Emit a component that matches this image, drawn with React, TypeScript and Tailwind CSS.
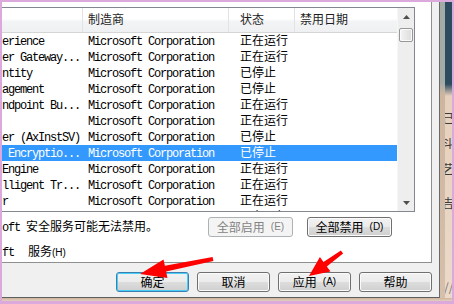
import React from "react";

type Row = { name: string; maker: string; status: string; selected?: boolean };

const rows: Row[] = [
  { name: "erience", maker: "Microsoft Corporation", status: "正在运行" },
  { name: "er Gateway...", maker: "Microsoft Corporation", status: "正在运行" },
  { name: "ntity", maker: "Microsoft Corporation", status: "已停止" },
  { name: "agement", maker: "Microsoft Corporation", status: "已停止" },
  { name: "ndpoint Bu...", maker: "Microsoft Corporation", status: "正在运行" },
  { name: "", maker: "Microsoft Corporation", status: "正在运行" },
  { name: "er (AxInstSV)", maker: "Microsoft Corporation", status: "已停止" },
  { name: " Encryptio...", maker: "Microsoft Corporation", status: "已停止", selected: true },
  { name: "Engine", maker: "Microsoft Corporation", status: "正在运行" },
  { name: "lligent Tr...", maker: "Microsoft Corporation", status: "正在运行" },
  { name: "r", maker: "Microsoft Corporation", status: "正在运行" },
  { name: "", maker: "Microsoft Corporation", status: "正在运行" },
];

// half-width latin text in the list font is 6px a char
function Latin({ children }: { children: React.ReactNode }) {
  return <span className="tracking-[-1.2px] whitespace-pre">{children}</span>;
}

function Key({ children }: { children: React.ReactNode }) {
  return <span className="ml-[6px] text-[10px] font-['Liberation_Sans',sans-serif]">{children}</span>;
}

const btnBase =
  "h-[20px] rounded-[3px] border flex items-center justify-center text-[12px] leading-[16px] font-['Noto_Sans_CJK_SC',sans-serif]";
const btnNormal =
  btnBase +
  " border-[#707070] text-black bg-[linear-gradient(#f2f2f2_0%,#ebebeb_50%,#dddddd_51%,#cfcfcf_100%)] shadow-[inset_0_0_0_1px_#fbfbfb]";

export default function App() {
  return (
    <div className="relative w-[454px] h-[304px] overflow-hidden bg-[#dba9dc] pt-[2px] pl-[2px] pr-[2px] pb-[3px] text-[12px] leading-[16px] text-black font-['Liberation_Mono','Noto_Sans_CJK_SC',monospace]">
      <div className="flex flex-col w-full h-full">
        <div className="flex h-[296px]">
          {/* dialog */}
          <div className="flex flex-col w-[437px] bg-[#f0f0f0] border-b border-[#5e5e5e]">
            {/* tab page */}
            <div className="w-[430px] h-[261px] shrink-0 bg-white border-r border-b border-[#8e8f8f] pt-[5px] flex flex-col">
              {/* services list */}
              <div className="flex w-[413px] h-[205px] shrink-0 border-t border-r border-b border-[#828790]">
                <div className="w-[395px] overflow-hidden flex flex-col">
                  <div className="h-[25px] shrink-0 flex border-b border-[#d5d5d5] bg-[linear-gradient(#ffffff_0%,#ffffff_45%,#f3f4f6_55%,#eff0f2_100%)] text-[#1e1e1e]">
                    <div className="w-[81px] border-r border-[#e2e3e5]" />
                    <div className="w-[146px] border-r border-[#e2e3e5] pl-[5px] pt-[5px]">制造商</div>
                    <div className="w-[66px] border-r border-[#e2e3e5] pl-[11px] pt-[5px]">状态</div>
                    <div className="flex-1 pl-[5px] pt-[5px]">禁用日期</div>
                  </div>
                  {rows.map((r, i) => (
                    <div
                      key={i}
                      className={
                        "h-[16px] shrink-0 flex leading-[18px] " +
                        (r.selected ? "bg-[#3399ff] text-white" : "text-black")
                      }
                    >
                      <div className="w-[81px] overflow-hidden">
                        <Latin>{r.name}</Latin>
                      </div>
                      <div className="w-[146px] pl-[5px] overflow-hidden">
                        <Latin>{r.maker}</Latin>
                      </div>
                      <div className="w-[66px] pl-[11px] h-[16px] overflow-hidden">{r.status}</div>
                      <div className="flex-1" />
                    </div>
                  ))}
                </div>
                {/* vertical scrollbar */}
                <div className="w-[17px] flex flex-col bg-[#eeeeee] border-l border-[#f7f7f7]">
                  <div className="h-[18px] flex items-center justify-center">
                    <svg width="7" height="4" viewBox="0 0 7 4">
                      <polygon points="3.5,0 7,4 0,4" fill="#4f4f4f" />
                    </svg>
                  </div>
                  <div className="mt-[2px] mx-[1px] h-[14px] rounded-[2px] border border-[#979797] bg-[linear-gradient(90deg,#f4f4f4,#dcdcdc)] shadow-[inset_0_0_0_1px_#fafafa]" />
                  <div className="flex-1" />
                  <div className="h-[17px] flex items-center justify-center">
                    <svg width="7" height="4" viewBox="0 0 7 4">
                      <polygon points="0,0 7,0 3.5,4" fill="#4f4f4f" />
                    </svg>
                  </div>
                </div>
              </div>

              {/* below the list */}
              <div className="flex items-start mt-[5px] pr-[39px]">
                <div className="mt-[3px] leading-[16px] whitespace-pre">
                  <Latin>oft </Latin>安全服务可能无法禁用。
                </div>
                <div className="ml-auto flex gap-[14px]">
                  <div className={btnBase + " w-[85px] border-[#adb2b5] bg-[#f4f4f4] text-[#838383]"}>
                    全部启用<Key>(E)</Key>
                  </div>
                  <div className={btnNormal + " w-[85px]"}>
                    全部禁用<Key>(D)</Key>
                  </div>
                </div>
              </div>
              <div className="mt-[8px] leading-[16px] flex">
                <Latin>ft</Latin>
                <span className="ml-[14px]">服务</span>
                <span className="text-[10px] font-['Liberation_Sans',sans-serif]">(H)</span>
              </div>
            </div>

            {/* button bar */}
            <div className="flex-1 flex items-start pl-[114px] pt-[9px] gap-[8px]">
              <div className={btnBase + " w-[73px] border-[#3c7fb1] bg-[linear-gradient(#f2f2f2_0%,#ebebeb_50%,#dddddd_51%,#cfcfcf_100%)] shadow-[inset_0_0_0_1px_#48cdf6]"}>
                确定
              </div>
              <div className={btnNormal + " w-[73px]"}>取消</div>
              <div className={btnNormal + " w-[73px]"}>
                应用<Key>(A)</Key>
              </div>
              <div className={btnNormal + " w-[73px]"}>帮助</div>
            </div>
          </div>

          {/* window frame on the right */}
          <div className="w-[13px] flex border-l border-[#6a6a6a]">
            <div className="w-[5px] bg-[linear-gradient(#a3aba6_0px,#a3aba6_80px,#cdb5a0_92px,#d6c0ab_100%)]" />
            <div className="flex-1 overflow-hidden flex flex-col items-start bg-[linear-gradient(#2c4b5e_0px,#2c4b5e_82px,#e6d0bd_94px,#ecd9c9_100%)] text-[#3c3c3c] font-['Noto_Sans_CJK_SC',sans-serif]">
              <span className="mt-[108px] -ml-[3px]">己</span>
              <span className="mt-[9px] -ml-[3px]">斗</span>
              <span className="mt-[10px] -ml-[3px]">艺</span>
              <span className="mt-[18px] -ml-[3px]">吉</span>
              <span className="mt-[68px] -ml-[1px] text-[#777]">//</span>
            </div>
          </div>
        </div>
        <div className="h-[3px] bg-[linear-gradient(#cdb49f,#e3cfbd)]" />
      </div>

      {/* red arrows drawn over the screenshot */}
      <svg className="absolute inset-0 pointer-events-none" width="454" height="304" viewBox="0 0 454 304">
        <polygon
          points="140,274 167.4,278 166.1,271.6 213.4,261 212.6,257 164.9,265.8 163.5,259.4"
          fill="#ff0000"
        />
        <polygon
          points="309,276 330.5,271.5 326.8,266.5 343.1,253.5 340.9,250.5 323.5,262 319.9,257"
          fill="#ff0000"
        />
      </svg>
    </div>
  );
}
